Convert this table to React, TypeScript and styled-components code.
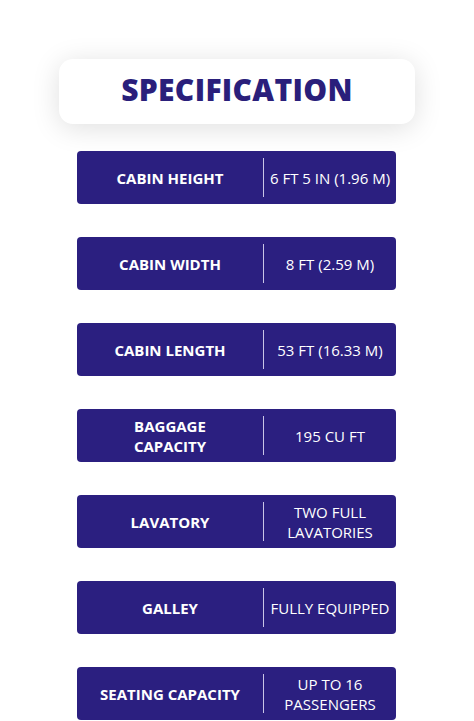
import React from 'react';
import styled, { createGlobalStyle } from 'styled-components';

const GlobalStyle = createGlobalStyle`
	html, body {
		margin: 0;
		padding: 0;
		background: #ffffff;
	}
	body {
		font-family: 'Open Sans', 'Liberation Sans', sans-serif;
	}
`;

const SpecSection = styled.section`
	display: flex;
	flex-flow: column;
	align-items: center;
	padding-top: 59px;
	width: 474px;
	height: 721px;
	overflow: hidden;
	box-sizing: border-box;
`;

const TitleCard = styled.div`
	display: flex;
	justify-content: center;
	align-items: center;
	width: 356px;
	height: 65px;
	margin-bottom: 27px;
	padding-bottom: 5px;
	box-sizing: border-box;
	background: #ffffff;
	border-radius: 14px;
	box-shadow: 0 4px 28px rgba(0, 0, 0, 0.13);
	h1 {
		margin: 0;
		font-size: 30px;
		font-weight: 800;
		letter-spacing: 0.3px;
		color: #2a1f7b;
	}
`;

const SpecList = styled.div`
	display: flex;
	flex-flow: column;
	gap: 33px;
	margin-left: -1px;
`;

const SpecRow = styled.div`
	display: flex;
	align-items: center;
	width: 319px;
	height: 53px;
	background: #2b1f80;
	border-radius: 4px;
	color: #ffffff;
	text-transform: uppercase;
`;

const Label = styled.div`
	flex: 0 0 186px;
	text-align: center;
	font-size: 15px;
	font-weight: 700;
	line-height: 20px;
	padding: 0 8px;
	box-sizing: border-box;
`;

const Divider = styled.span`
	width: 1px;
	height: 39px;
	background: #c9c5e6;
`;

const Value = styled.div`
	flex: 1;
	text-align: center;
	font-size: 15px;
	font-weight: 400;
	line-height: 20px;
	white-space: nowrap;
`;

type Spec = {
	label: string[];
	value: string[];
};

const specs: Spec[] = [
	{ label: ['Cabin Height'], value: ['6 ft 5 in (1.96 m)'] },
	{ label: ['Cabin Width'], value: ['8 ft (2.59 m)'] },
	{ label: ['Cabin Length'], value: ['53 ft (16.33 m)'] },
	{ label: ['Baggage', 'Capacity'], value: ['195 cu ft'] },
	{ label: ['Lavatory'], value: ['Two full', 'lavatories'] },
	{ label: ['Galley'], value: ['Fully equipped'] },
	{ label: ['Seating Capacity'], value: ['Up to 16', 'passengers'] },
];

export default function App() {
	return (
		<>
			<GlobalStyle />
			<SpecSection>
				<TitleCard>
					<h1>SPECIFICATION</h1>
				</TitleCard>
				<SpecList>
					{specs.map((spec) => (
						<SpecRow key={spec.label.join('-')}>
							<Label>
								{spec.label.map((line) => (
									<div key={line}>{line}</div>
								))}
							</Label>
							<Divider />
							<Value>
								{spec.value.map((line) => (
									<div key={line}>{line}</div>
								))}
							</Value>
						</SpecRow>
					))}
				</SpecList>
			</SpecSection>
		</>
	);
}
